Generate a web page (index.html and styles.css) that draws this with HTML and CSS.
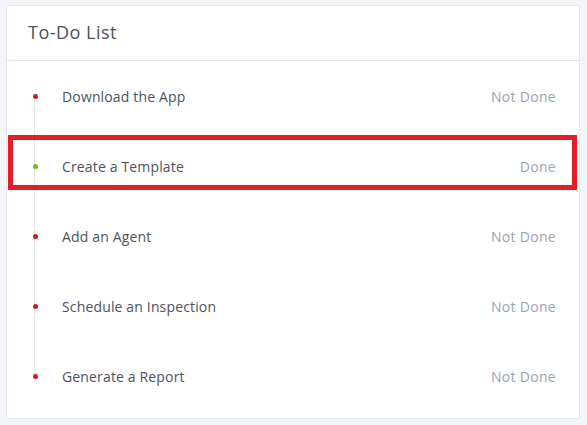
FILE: index.html
```html
<!DOCTYPE html>
<html>
<head>
<meta charset="utf-8">
<link rel="stylesheet" href="styles.css">
</head>
<body>
<div class="card">
  <div class="card-header">To-Do List</div>
  <ul class="todo">
    <li class="item"><span class="dot red"></span><span class="label">Download the App</span><span class="status">Not Done</span></li>
    <li class="item highlighted"><span class="dot green"></span><span class="label">Create a Template</span><span class="status">Done</span><span class="highlight-box"></span></li>
    <li class="item"><span class="dot red"></span><span class="label">Add an Agent</span><span class="status">Not Done</span></li>
    <li class="item"><span class="dot red"></span><span class="label">Schedule an Inspection</span><span class="status">Not Done</span></li>
    <li class="item last"><span class="dot red"></span><span class="label">Generate a Report</span><span class="status">Not Done</span></li>
  </ul>
</div>
</body>
</html>
```
FILE: styles.css
```css
* { box-sizing: border-box; }
html, body { margin: 0; padding: 0; }
body {
  background: #f4f5f8;
  font-family: "Open Sans", "Noto Sans", sans-serif;
  width: 587px;
  height: 425px;
  padding: 5px 7px 0 6px;
}
.card {
  background: #fff;
  border: 1px solid #e3e6ec;
  border-radius: 3px;
  height: 414px;
  position: relative;
}
.card-header {
  height: 55px;
  border-bottom: 1px solid #e3e6ec;
  padding: 0 0 3px 21px;
  display: flex;
  align-items: center;
  font-size: 18px;
  font-weight: 400;
  color: #4a4f5c;
  letter-spacing: 0.5px;
}
.todo {
  list-style: none;
  margin: 0;
  padding: 0;
}
.item {
  position: relative;
  height: 70px;
  display: flex;
  align-items: center;
  padding: 0 23px 0 26px;
}
.item::before {
  content: "";
  position: absolute;
  left: 27px;
  top: 35px;
  height: 70px;
  width: 1px;
  background: #e6e6ec;
}
.item.last::before { display: none; }
.dot {
  width: 5px;
  height: 5px;
  border-radius: 50%;
  position: relative;
  z-index: 1;
  flex: none;
}
.dot.red { background: #d11a24; }
.dot.green { background: #6bbf0f; }
.label {
  margin-left: 24px;
  font-size: 14px;
  color: #4c5260;
  letter-spacing: 0.15px;
  flex: 1;
}
.status {
  font-size: 14px;
  color: #9ca2b0;
  letter-spacing: 0.3px;
}
.highlight-box {
  position: absolute;
  left: 1px;
  right: 2px;
  top: 4px;
  height: 55px;
  border: 5px solid #e81c24;
  pointer-events: none;
}
```
